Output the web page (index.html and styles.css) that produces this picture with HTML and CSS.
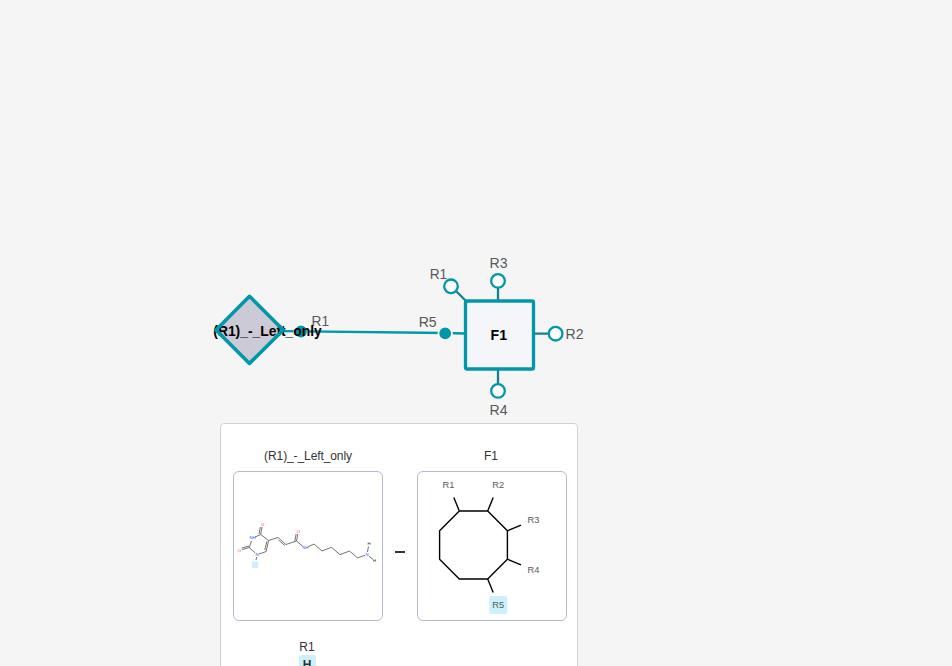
FILE: index.html
```
<!DOCTYPE html>
<html lang="en">
<head>
<meta charset="utf-8">
<title>Monomer connection</title>
<link rel="stylesheet" href="styles.css">
</head>
<body>
<main class="canvas">
  <svg class="graph" width="952" height="666" viewBox="0 0 952 666">
    <polygon class="diamond-fill" points="249.5,296.5 283,330 249.5,363 216,330"/>
    <path class="bond" d="M284 331.2L445 333L465 333.5"/>
    <path class="stub" d="M498 301V287M498 370V385M534 333.7H549M467 302L455 290"/>
    <rect class="square" x="465.5" y="301" width="68" height="68" rx="1.5"/>
    <g class="used">
      <circle cx="301" cy="331.5" r="6.8"/>
      <circle cx="445.2" cy="333.3" r="6.8"/>
    </g>
    <g class="free">
      <circle cx="451" cy="286.3" r="6.8"/>
      <circle cx="498" cy="280.9" r="6.8"/>
      <circle cx="555.6" cy="333.7" r="6.8"/>
      <circle cx="498" cy="390.9" r="6.8"/>
    </g>
    <g class="port">
      <text x="311.5" y="326" textLength="17.5" lengthAdjust="spacingAndGlyphs">R1</text>
      <text x="429.7" y="279" textLength="17.5" lengthAdjust="spacingAndGlyphs">R1</text>
      <text x="489.5" y="268.3" textLength="18" lengthAdjust="spacingAndGlyphs">R3</text>
      <text x="418.7" y="327.3" textLength="18" lengthAdjust="spacingAndGlyphs">R5</text>
      <text x="565.5" y="339.3" textLength="18" lengthAdjust="spacingAndGlyphs">R2</text>
      <text x="489.5" y="415.3" textLength="18" lengthAdjust="spacingAndGlyphs">R4</text>
    </g>
    <g class="name">
      <text x="213.3" y="336" textLength="108.5" lengthAdjust="spacingAndGlyphs">(R1)_-_Left_only</text>
      <text x="490.5" y="340.2" textLength="16.5" lengthAdjust="spacingAndGlyphs">F1</text>
    </g>
    <polygon class="diamond" points="249.5,296.3 283.2,330 249.5,363.4 216,330"/>
  </svg>

  <section class="preview">
    <div class="monomers">
      <div class="monomer">
        <h2 class="title">(R1)_-_Left_only</h2>
        <div class="card">
          <svg width="148" height="148" viewBox="234 472 148 148">
            <rect class="leaving" x="251.8" y="561.5" width="6.4" height="6.4" rx="1"/>
            <path class="thin" d="M255.2 553L249.3 547.5L251.4 541M255 537L260.7 534.5L268.5 540.5L266.2 551.5L259 554M266.8 541.5L264.8 550M260.7 534.5L262 527M259.1 534L260.3 527M249.3 547.5L242 549.6M249 546L241.8 548M268.5 540.5L278 537.5L286 544.5L296.5 541L297.8 534M278.5 540L284.8 545.5M294.8 541L296.1 534M296.5 541L302.8 546.4M308 546.8L314 544L322 551L331.5 547.3L340 554.7L349.5 551L357.5 557.8L365 555.3M367.4 552L368.5 546.5M369 556.3L373 559.3M256.7 557L256 560"/>
            <g class="atom nitrogen">
              <text x="257" y="556.2">N</text><text x="252.5" y="539.4">NH</text>
              <text x="305.3" y="549.3">NH</text><text x="367" y="556.2">N</text>
            </g>
            <g class="atom oxygen">
              <text x="262.6" y="525.5">O</text><text x="239.4" y="552.2">O</text><text x="298.4" y="532.5">O</text>
            </g>
            <g class="atom">
              <text x="369" y="545.3">H</text><text x="374.6" y="562">H</text>
            </g>
          </svg>
        </div>
        <div class="group">
          <span class="group-name">R1</span>
          <span class="group-cap">H</span>
        </div>
      </div>
      <span class="dash"></span>
      <div class="monomer">
        <h2 class="title fragment">F1</h2>
        <div class="card">
          <svg width="148" height="148" viewBox="418 472 148 148">
            <rect class="leaving" x="489.2" y="596" width="18" height="18" rx="2"/>
            <path class="ring" d="M459.3 511H487.7L507.4 530.8V559.2L487.7 579H459.3L439.6 559.2V530.8ZM459.3 511L453.8 497.5M487.7 511L493.2 497.5M507.4 530.8L521 525.2M507.4 559.2L521 564.8M487.7 579L493.2 592.4"/>
            <g class="site">
              <text x="448.4" y="488">R1</text><text x="498.2" y="488">R2</text>
              <text x="533.5" y="523.3">R3</text><text x="533.5" y="573.2">R4</text>
              <text x="498.2" y="608.3">R5</text>
            </g>
          </svg>
        </div>
      </div>
    </div>
  </section>
</main>
</body>
</html>
```
FILE: styles.css
```
body {
  margin: 0;
  background: #f5f5f5;
  font-family: "Liberation Sans", Arial, sans-serif;
}
.canvas {
  position: relative;
  width: 952px;
  height: 666px;
  overflow: hidden;
}
.graph, .card svg { display: block; }
.diamond-fill { fill: #cccad6; }
.diamond {
  fill: none;
  stroke: #0097a8;
  stroke-width: 3.6;
  stroke-linejoin: round;
}
.square { fill: #f5f6f9; stroke: #0097a8; stroke-width: 3.3; }
.bond { fill: none; stroke: #0097a8; stroke-width: 2.3; }
.stub { stroke: #17808c; stroke-width: 2.3; }
.used circle { fill: #0097a8; stroke: #f8fafa; stroke-width: 1.8; }
.free circle { fill: #fff; stroke: #0097a8; stroke-width: 2.3; }
.port text { font-size: 14.8px; fill: #585858; }
.name text { font-size: 14.3px; font-weight: 700; fill: #000; }

.preview {
  position: absolute;
  left: 220px;
  top: 423px;
  box-sizing: border-box;
  width: 358px;
  height: 280px;
  padding: 24px 10px 0 12px;
  border: 1px solid #cad3dd;
  border-radius: 4px;
  background: #fff;
}
.monomers { display: flex; align-items: flex-start; }
.monomer { width: 150px; }
.title {
  margin: 0 0 7px;
  font-size: 12px;
  line-height: 16px;
  font-weight: 400;
  letter-spacing: -0.1px;
  text-align: center;
  color: #333;
}
.fragment { padding-right: 2px; }
.card {
  box-sizing: border-box;
  width: 150px;
  height: 150px;
  border: 1px solid #b4b9d6;
  border-radius: 6px;
}
.dash {
  width: 10px;
  height: 2px;
  margin: 103px 12px 0;
  background: #333;
}
.leaving { fill: #cdf1fc; }
.thin { fill: none; stroke: #444; stroke-width: 0.75; }
.ring {
  fill: none;
  stroke: #000;
  stroke-width: 1.4;
  stroke-linejoin: round;
}
.site text { font-size: 9.3px; fill: #585858; text-anchor: middle; }
.atom text { font-size: 4.2px; fill: #222; text-anchor: middle; }
.atom.nitrogen text { fill: #304ff7; }
.atom.oxygen text { fill: #f22; }
.group {
  display: flex;
  flex-direction: column;
  align-items: center;
  width: 148px;
  margin-top: 18px;
}
.group-name { font-size: 12px; line-height: 16px; color: #333; }
.group-cap {
  width: 17px;
  height: 20px;
  border-radius: 3px;
  background: #cdf1fc;
  font-size: 12px;
  line-height: 21px;
  font-weight: 700;
  text-align: center;
  color: #333;
}
```
